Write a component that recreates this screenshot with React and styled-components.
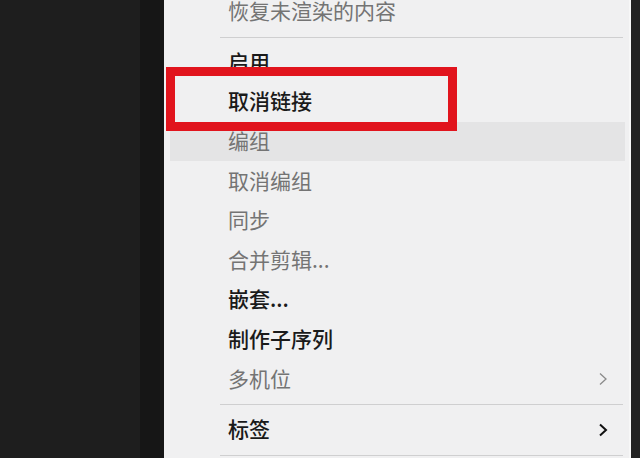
import React from "react";
import styled, { createGlobalStyle } from "styled-components";

const GlobalStyle = createGlobalStyle`
	html, body {
		margin: 0;
		padding: 0;
		background: #1e1e1e;
		overflow: hidden;
	}
	body {
		font-family: "Noto Sans CJK SC", "Noto Sans", sans-serif;
	}
`;

const items = [
	{ label: "恢复未渲染的内容", disabled: true },
	{ separator: true },
	{ label: "启用" },
	{ label: "取消链接" },
	{ label: "编组", disabled: true, hover: true },
	{ label: "取消编组", disabled: true },
	{ label: "同步", disabled: true },
	{ label: "合并剪辑...", disabled: true },
	{ label: "嵌套..." },
	{ label: "制作子序列" },
	{ label: "多机位", disabled: true, submenu: true },
	{ separator: true },
	{ label: "标签", submenu: true },
	{ separator: true },
];

function Chevron({ disabled }) {
	return (
		<svg width="10" height="16" viewBox="0 0 10 16">
			<polyline
				points="2,2.5 8,8 2,13.5"
				fill="none"
				stroke={disabled ? "#8a8a8a" : "#111"}
				strokeWidth={disabled ? 1.3 : 2}
				strokeLinejoin="miter"
			/>
		</svg>
	);
}

export default function App() {
	return (
		<>
			<GlobalStyle />
			<Screen>
				<Timeline />
				<Gutter />
				<Menu>
					<List>
						{items.map((item, i) =>
							item.separator ? (
								<Separator key={i} />
							) : (
								<Item key={i} $disabled={item.disabled} $hover={item.hover}>
									<span>{item.label}</span>
									{item.submenu && <Chevron disabled={item.disabled} />}
								</Item>
							)
						)}
					</List>
					<Highlight />
				</Menu>
				<RightEdge />
			</Screen>
		</>
	);
}

const Screen = styled.div`
	display: flex;
	width: 640px;
	height: 458px;
	overflow: hidden;
`;

const Timeline = styled.div`
	width: 140px;
	background: #1e1e1e;
`;

const Gutter = styled.div`
	width: 24px;
	background: #161616;
`;

const Menu = styled.div`
	position: relative;
	flex: 1;
	background: #f0f0f1;
	border-right: 2px solid #f7f7f7;
`;

const List = styled.div`
	display: flex;
	flex-direction: column;
	margin-top: -8px;
	padding: 0 4px 0 6px;
`;

const Item = styled.div`
	display: flex;
	align-items: center;
	justify-content: space-between;
	height: 39.6px;
	padding: 0 17px 0 58px;
	font-size: 21px;
	font-weight: ${({ $disabled }) => ($disabled ? 400 : 500)};
	color: ${({ $disabled }) => ($disabled ? "#747474" : "#1a1a1a")};
	background: ${({ $hover }) => ($hover ? "#e4e4e5" : "transparent")};
	line-height: 1;

	span {
		position: relative;
		top: -1px;
	}
`;

const Separator = styled.div`
	height: 11px;
	display: flex;
	align-items: center;
	margin: 0 2px 0 50px;

	&::after {
		content: "";
		flex: 1;
		height: 1px;
		background: #cfcfd0;
	}
`;

const Highlight = styled.div`
	position: absolute;
	left: 2px;
	top: 67px;
	width: 291px;
	height: 64px;
	box-sizing: border-box;
	border: 9px solid #e1141d;
	pointer-events: none;
`;

const RightEdge = styled.div`
	width: 9px;
	background: #222222;
`;
